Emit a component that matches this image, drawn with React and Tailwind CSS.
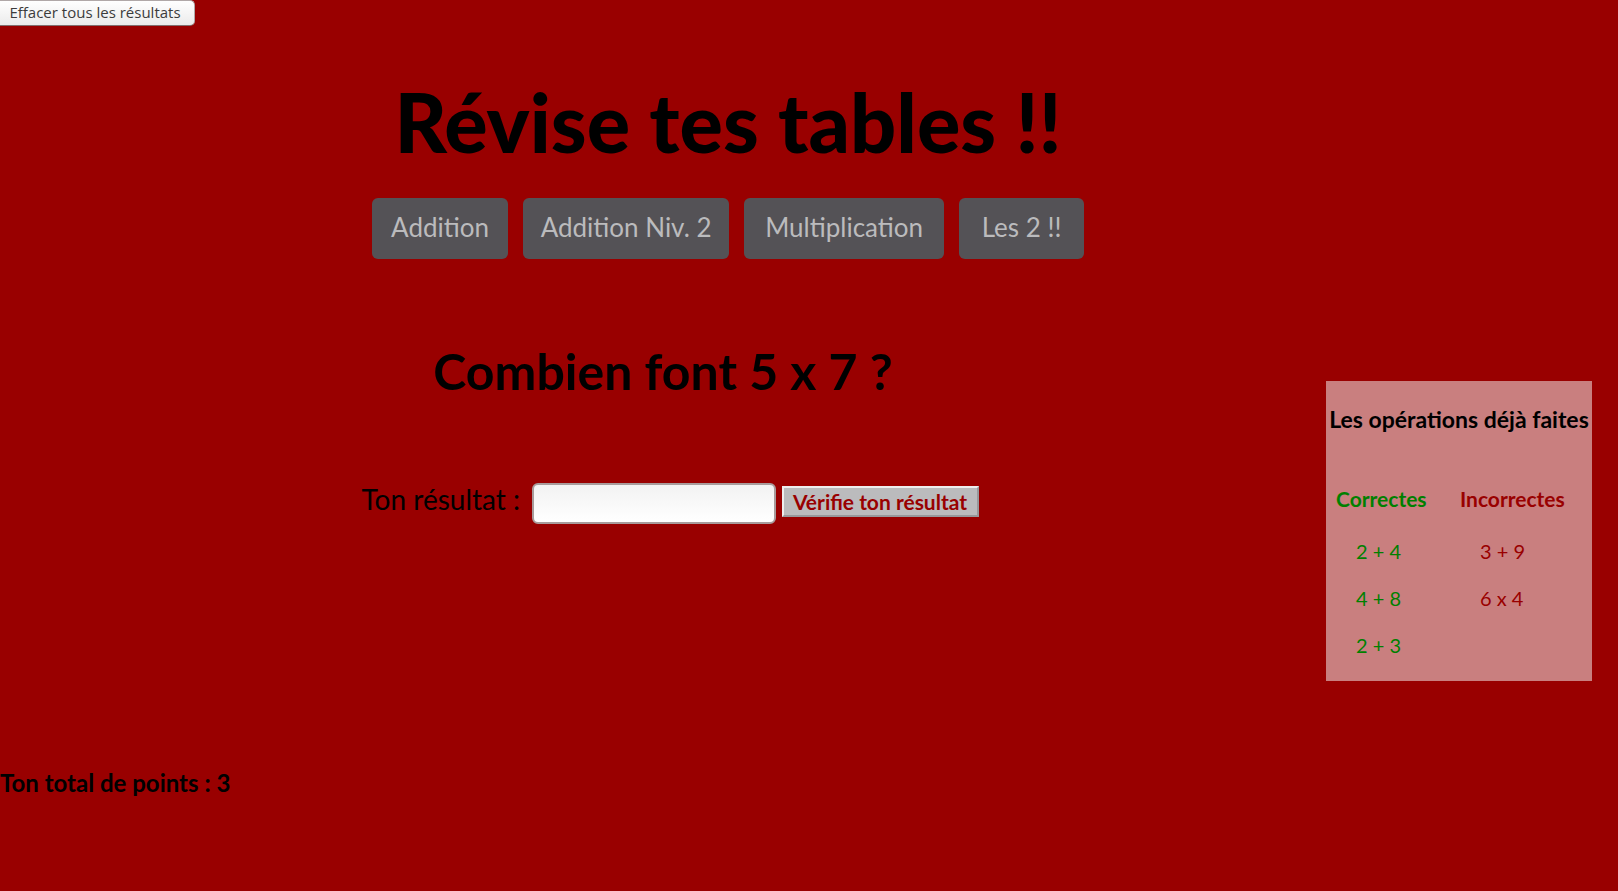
const modes = [
  { label: 'Addition', width: 'w-[136px]' },
  { label: 'Addition Niv. 2', width: 'w-[206px]' },
  { label: 'Multiplication', width: 'w-[200px]' },
  { label: 'Les 2 !!', width: 'w-[125px]' },
];

const operations = [
  ['2 + 4', '3 + 9'],
  ['4 + 8', '6 x 4'],
  ['2 + 3', ''],
];

export default function App() {
  return (
    <div className="min-h-screen overflow-x-hidden bg-[#990000] font-['Lato',sans-serif] text-black">
      <button
        type="button"
        className="block h-[26px] w-[195px] rounded-r-[5px] border border-l-0 border-[#b0a8a8] border-b-[#807070] bg-linear-to-b from-white to-[#ebebeb] pr-1 pb-0.5 font-['Open_Sans',sans-serif] text-[15px] leading-5 whitespace-nowrap text-[#3c3c3c]"
      >
        Effacer tous les résultats
      </button>

      <header className="flex w-[90%] flex-col items-center pt-11">
        <h1 className="text-[81px] leading-[104px] font-black whitespace-nowrap">Révise tes tables !!</h1>
        <nav className="mt-6 flex gap-[15px]">
          {modes.map((mode) => (
            <button
              key={mode.label}
              type="button"
              className={`h-[61px] rounded-[6px] bg-[#545256] pb-1 text-[26px] leading-8 whitespace-nowrap text-[#bbbbbd] ${mode.width}`}
            >
              {mode.label}
            </button>
          ))}
        </nav>
      </header>

      <main className="flex items-start pt-20 pr-[26px]">
        <section className="flex flex-1 flex-col items-center">
          <h2 className="text-[50px] leading-[64px] font-bold whitespace-nowrap">Combien font 5 x 7 ?</h2>
          <form className="mt-20 ml-3.5 flex items-start" onSubmit={(event) => event.preventDefault()}>
            <label htmlFor="resultat" className="w-[170px] text-[28px] leading-8 whitespace-nowrap">
              Ton résultat :
            </label>
            <input
              id="resultat"
              type="text"
              autoComplete="off"
              className="h-[41px] w-[244px] rounded-[6px] border-2 border-[#a89c9c] bg-linear-to-b from-[#f2f2f2] to-white px-2 text-[26px] outline-none"
            />
            <button
              type="submit"
              className="mt-[3px] ml-1.5 h-[31px] w-[197px] border-2 border-t-[#eeeeee] border-r-[#98989b] border-b-[#98989b] border-l-[#eeeeee] bg-[#bbbbbd] text-[21px] leading-6 font-bold whitespace-nowrap text-[#990000]"
            >
              Vérifie ton résultat
            </button>
          </form>
        </section>

        <aside className="mt-[42px] h-[300px] w-[266px] bg-[#c97f7f] pt-[22px]">
          <h3 className="text-center text-[23px] leading-8 font-bold whitespace-nowrap">Les opérations déjà faites</h3>
          <table className="mt-9 w-full table-fixed text-left text-[20px]">
            <thead>
              <tr className="h-[56px] font-bold">
                <th scope="col" className="w-[124px] pl-2.5 text-[21px] text-[#008000]">Correctes</th>
                <th scope="col" className="pl-2.5 text-[21px] text-[#990000]">Incorrectes</th>
              </tr>
            </thead>
            <tbody>
              {operations.map(([correct, incorrect]) => (
                <tr key={correct} className="h-[47px]">
                  <td className="pl-[30px] text-[#008000]">{correct}</td>
                  <td className="pl-[30px] text-[#990000]">{incorrect}</td>
                </tr>
              ))}
            </tbody>
          </table>
        </aside>
      </main>

      <p className="mt-[86px] text-[24px] leading-8 font-bold whitespace-nowrap">Ton total de points : 3</p>
    </div>
  );
}
